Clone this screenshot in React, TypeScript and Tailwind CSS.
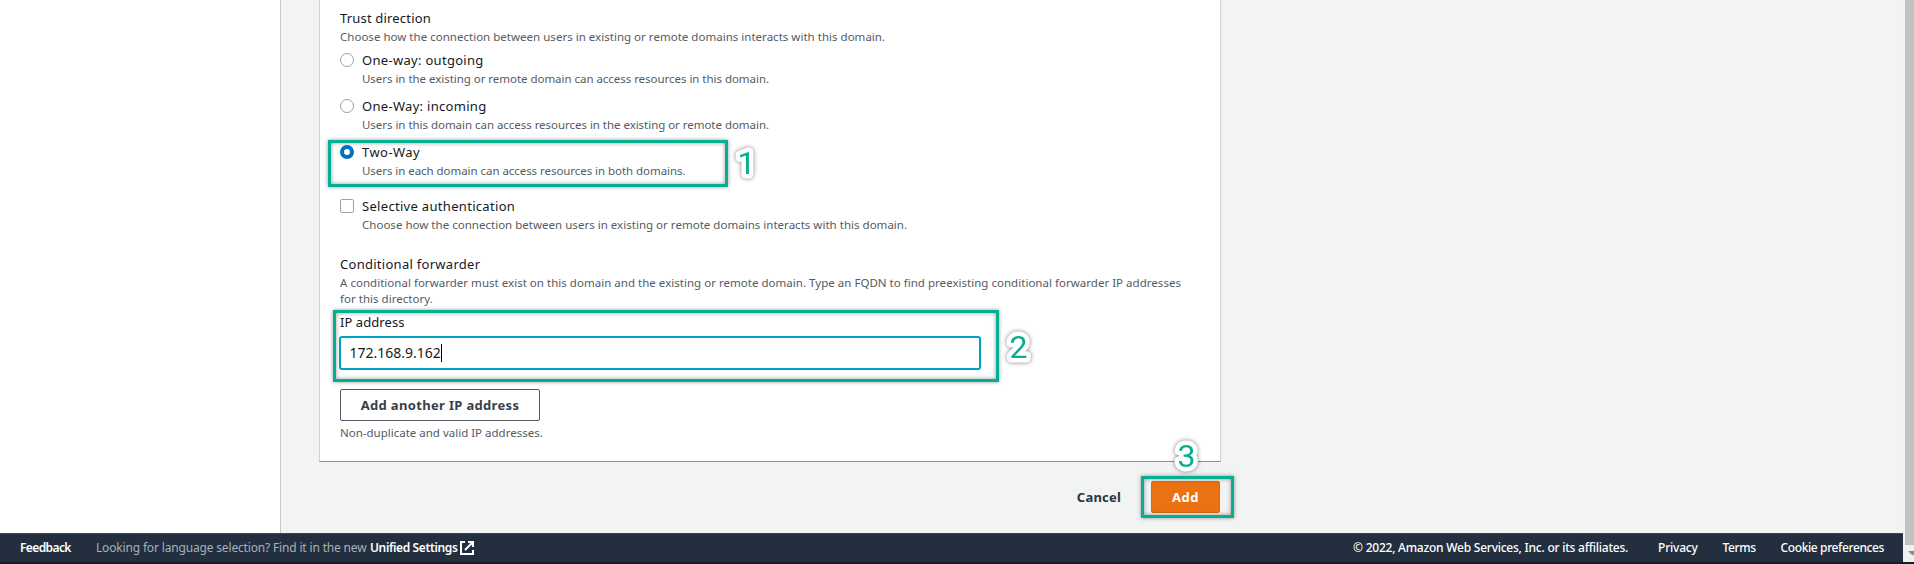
import React from 'react';

type OptionProps = {
  label: string;
  labelClass?: string;
  hint: string;
  hintClass?: string;
  control: React.ReactNode;
};

function Option({ label, labelClass = '', hint, hintClass = '', control }: OptionProps) {
  return (
    <div className="flex gap-2">
      <div className="pt-1">{control}</div>
      <div>
        <div className={`h-[22px] text-[13px] leading-[22px] text-[#16191f] ${labelClass}`}>{label}</div>
        <div className={`h-4 text-[11.5px] leading-4 text-[#545b64] ${hintClass}`}>{hint}</div>
      </div>
    </div>
  );
}

function Radio({ checked = false }: { checked?: boolean }) {
  return checked ? (
    <div className="size-3.5 rounded-full border-4 border-[#0073bb] bg-white" />
  ) : (
    <div className="size-3.5 rounded-full border border-[#95a5a6] bg-white" />
  );
}

function Marker({ n, className }: { n: string; className: string }) {
  return (
    <svg
      className={`absolute h-11 w-9 overflow-visible drop-shadow-[0_0_2px_rgba(0,0,0,0.5)] ${className}`}
      viewBox="0 0 36 44"
    >
      <text
        x="18.5"
        y="33.5"
        textAnchor="middle"
        className="fill-[#05b090] stroke-white font-['Roboto',sans-serif] text-[32px] font-[450] [paint-order:stroke]"
        strokeWidth="9"
        strokeLinejoin="round"
      >
        {n}
      </text>
    </svg>
  );
}

const frame =
  'absolute border-[3px] border-[#05b090] shadow-[0_0_4px_rgba(0,0,0,0.4),inset_0_0_4px_rgba(0,0,0,0.4)]';

export default function App() {
  return (
    <div className="relative flex h-[564px] w-full flex-col overflow-hidden bg-[#181d1f] pb-0.5 font-['Noto_Sans','Open_Sans',sans-serif] whitespace-nowrap">
      <div className="flex min-h-0 flex-1">
        <div className="flex min-w-0 flex-1 flex-col">
          <div className="flex min-h-0 flex-1 bg-[#f2f3f3]">
            <aside className="w-[281px] shrink-0 border-r border-[#c4c9cb] bg-white" />
            <main className="ml-[38px] w-[902px]">
              <section className="h-[462px] border-x border-b border-x-[#cdd2d3] border-b-[#879596] bg-white pt-[7px] pl-5">
                <div className="h-[22px] text-[13px] leading-[22px] tracking-[0.18px] text-[#16191f]">
                  Trust direction
                </div>
                <div className="h-5 text-[11.5px] leading-4 tracking-[0.02px] text-[#545b64]">
                  Choose how the connection between users in existing or remote domains interacts with this domain.
                </div>
                <div className="flex flex-col gap-2">
                  <Option
                    control={<Radio />}
                    label="One-way: outgoing"
                    labelClass="tracking-[0.3px]"
                    hint="Users in the existing or remote domain can access resources in this domain."
                    hintClass="tracking-[-0.036px]"
                  />
                  <Option
                    control={<Radio />}
                    label="One-Way: incoming"
                    labelClass="tracking-[0.3px]"
                    hint="Users in this domain can access resources in the existing or remote domain."
                    hintClass="tracking-[-0.036px]"
                  />
                  <Option
                    control={<Radio checked />}
                    label="Two-Way"
                    labelClass="tracking-[0.45px]"
                    hint="Users in each domain can access resources in both domains."
                    hintClass="tracking-[-0.05px]"
                  />
                </div>
                <div className="mt-4">
                  <Option
                    control={<div className="size-3.5 rounded-[2px] border border-[#95a5a6] bg-white" />}
                    label="Selective authentication"
                    labelClass="tracking-[0.31px]"
                    hint="Choose how the connection between users in existing or remote domains interacts with this domain."
                    hintClass="tracking-[0.02px]"
                  />
                </div>
                <div className="mt-5 h-[22px] text-[13px] leading-[22px] tracking-[0.28px] text-[#16191f]">
                  Conditional forwarder
                </div>
                <div className="text-[11.5px] leading-4 tracking-[0.025px] text-[#545b64]">
                  A conditional forwarder must exist on this domain and the existing or remote domain. Type an FQDN to
                  find preexisting conditional forwarder IP addresses
                  <br />
                  for this directory.
                </div>
                <div className="mt-1 h-[22px] text-[13px] leading-[22px] tracking-[0.07px] text-[#16191f]">
                  IP address
                </div>
                <div className="mt-[3px] -ml-px flex h-[34px] w-[642px] items-center rounded-[3px] border-2 border-[#00a1c9] bg-white pl-[8.5px] text-sm text-[#16191f]">
                  172.168.9.162
                  <span className="h-[18px] w-px bg-black" />
                </div>
                <button className="mt-[19px] flex h-8 w-[200px] items-center justify-center rounded-[2px] border border-[#545b64] bg-white pt-0.5 text-[13px] font-bold tracking-[0.33px] text-[#373f4a]">
                  Add another IP address
                </button>
                <div className="mt-1 text-[11.5px] leading-4 text-[#545b64]">
                  Non-duplicate and valid IP addresses.
                </div>
              </section>
              <div className="mt-[19px] flex h-8 justify-end gap-[30px]">
                <button className="pt-0.5 text-[13px] font-bold tracking-[0.2px] text-[#2c3542]">Cancel</button>
                <button className="mr-px w-[69px] rounded-[2px] border border-[#e0680f] bg-[#ec7211] pt-0.5 text-[13px] font-bold tracking-[0.5px] text-white">
                  Add
                </button>
              </div>
            </main>
          </div>
          <footer className="flex h-[29px] shrink-0 items-center border-t border-[#3b4754] bg-[#232f3e] pr-[19px] pl-5 text-xs text-white">
            <span className="w-[76px] font-semibold tracking-[-0.6px]">Feedback</span>
            <span className="w-[274px] tracking-[-0.165px] text-[#a3b1b8]">
              Looking for language selection? Find it in the new
            </span>
            <span className="font-semibold tracking-[-0.366px]">Unified Settings</span>
            <svg className="ml-[2px] size-3.5" viewBox="0 0 14 14" fill="none" stroke="white" strokeWidth="2">
              <path d="M5 1H1v12h12V9M8 1h5v5M13 1L5 9" />
            </svg>
            <span className="ml-auto font-medium tracking-[-0.237px]">
              © 2022, Amazon Web Services, Inc. or its affiliates.
            </span>
            <span className="ml-[30px] font-medium tracking-[-0.222px]">Privacy</span>
            <span className="ml-[25px] font-medium tracking-[-0.41px]">Terms</span>
            <span className="ml-[25px] font-medium tracking-[-0.39px]">Cookie preferences</span>
          </footer>
        </div>
        <div className="flex w-[11px] shrink-0 flex-col bg-[#f1f1f1] pl-0.5">
          <div className="h-[545px] bg-[#c1c1c1]" />
          <svg className="mt-[6px] ml-[3px] h-[5px] w-2.5 shrink-0" viewBox="0 0 10 5">
            <path d="M0 0h9L4.5 4.5z" fill="#8a8a8a" />
          </svg>
        </div>
      </div>

      <div className={`${frame} top-[140px] left-[328px] h-[47px] w-[400px]`} />
      <div className={`${frame} top-[310px] left-[333px] h-[72px] w-[666px]`} />
      <div className={`${frame} top-[476px] left-[1141px] h-[42px] w-[93px]`} />
      <Marker n="1" className="top-[140px] left-[728px]" />
      <Marker n="2" className="top-[324px] left-[1000px]" />
      <Marker n="3" className="top-[433px] left-[1168px]" />
    </div>
  );
}
